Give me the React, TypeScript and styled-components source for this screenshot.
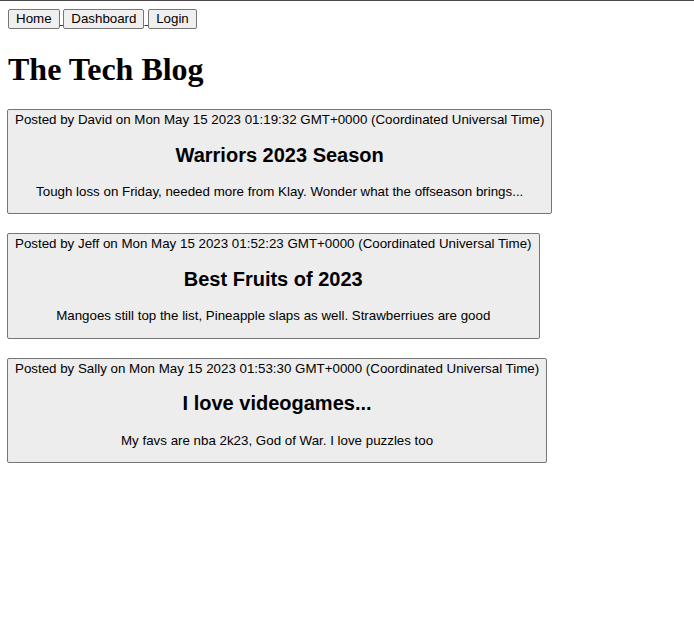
import React from "react";
import styled, { createGlobalStyle } from "styled-components";

const Global = createGlobalStyle`
  html, body { margin: 0; padding: 0; background: #fff; }
  body { font-family: "Liberation Serif", "Times New Roman", serif; color: #000; }
`;

const Page = styled.div`
  border-top: 1px solid #4a4a4a;
  padding: 8px;
`;

const Nav = styled.nav`
  display: block;
  line-height: 20px;
`;

const NavLink = styled.a`
  color: #551a8b;
  text-decoration: underline;
  font-family: "Liberation Sans", Arial, sans-serif;
  font-size: 13.333px;
`;

const NavButton = styled.button`
  font-family: "Liberation Sans", Arial, sans-serif;
  font-size: 13.333px;
  color: #000;
  background: #efefef;
  border: 1px solid #767676;
  border-radius: 2px;
  padding: 1px 7px;
  height: 20px;
  line-height: 16px;
  vertical-align: top;
`;

const Title = styled.h1`
  font-family: "Liberation Serif", "Times New Roman", serif;
  font-size: 32px;
  font-weight: bold;
  margin: 21px 0 21px;
`;

const PostList = styled.div`
  display: flex;
  flex-direction: column;
  align-items: flex-start;
  gap: 19px;
  margin-left: -1px;
`;

const PostCard = styled.button`
  font-family: "Liberation Sans", Arial, sans-serif;
  font-size: 13.333px;
  color: #000;
  background: #ededed;
  border: 1px solid #767676;
  border-radius: 2px;
  padding: 2px 7px 1px;
  text-align: center;
  display: block;
`;

const Meta = styled.div`
  line-height: 15px;
`;

const PostTitle = styled.h2`
  font-size: 20px;
  font-weight: bold;
  margin: 16.6px 0;
  line-height: 23px;
`;

const PostBody = styled.p`
  margin: 17.6px 0 13.1px;
  line-height: 15px;
`;

const posts = [
  {
    author: "David",
    date: "Mon May 15 2023 01:19:32 GMT+0000 (Coordinated Universal Time)",
    title: "Warriors 2023 Season",
    body: "Tough loss on Friday, needed more from Klay. Wonder what the offseason brings...",
  },
  {
    author: "Jeff",
    date: "Mon May 15 2023 01:52:23 GMT+0000 (Coordinated Universal Time)",
    title: "Best Fruits of 2023",
    body: "Mangoes still top the list, Pineapple slaps as well. Strawberriues are good",
  },
  {
    author: "Sally",
    date: "Mon May 15 2023 01:53:30 GMT+0000 (Coordinated Universal Time)",
    title: "I love videogames...",
    body: "My favs are nba 2k23, God of War. I love puzzles too",
  },
];

export default function App() {
  return (
    <>
      <Global />
      <Page>
        <Nav>
          <NavLink href="#">
            <NavButton>Home</NavButton>{" "}
          </NavLink>
          <NavLink href="#">
            <NavButton>Dashboard</NavButton>{" "}
          </NavLink>
          <NavLink href="#">
            <NavButton>Login</NavButton>
          </NavLink>
        </Nav>
        <Title>The Tech Blog</Title>
        <PostList>
          {posts.map((p) => (
            <PostCard key={p.title}>
              <Meta>
                Posted by {p.author} on {p.date}
              </Meta>
              <PostTitle>{p.title}</PostTitle>
              <PostBody>{p.body}</PostBody>
            </PostCard>
          ))}
        </PostList>
      </Page>
    </>
  );
}
